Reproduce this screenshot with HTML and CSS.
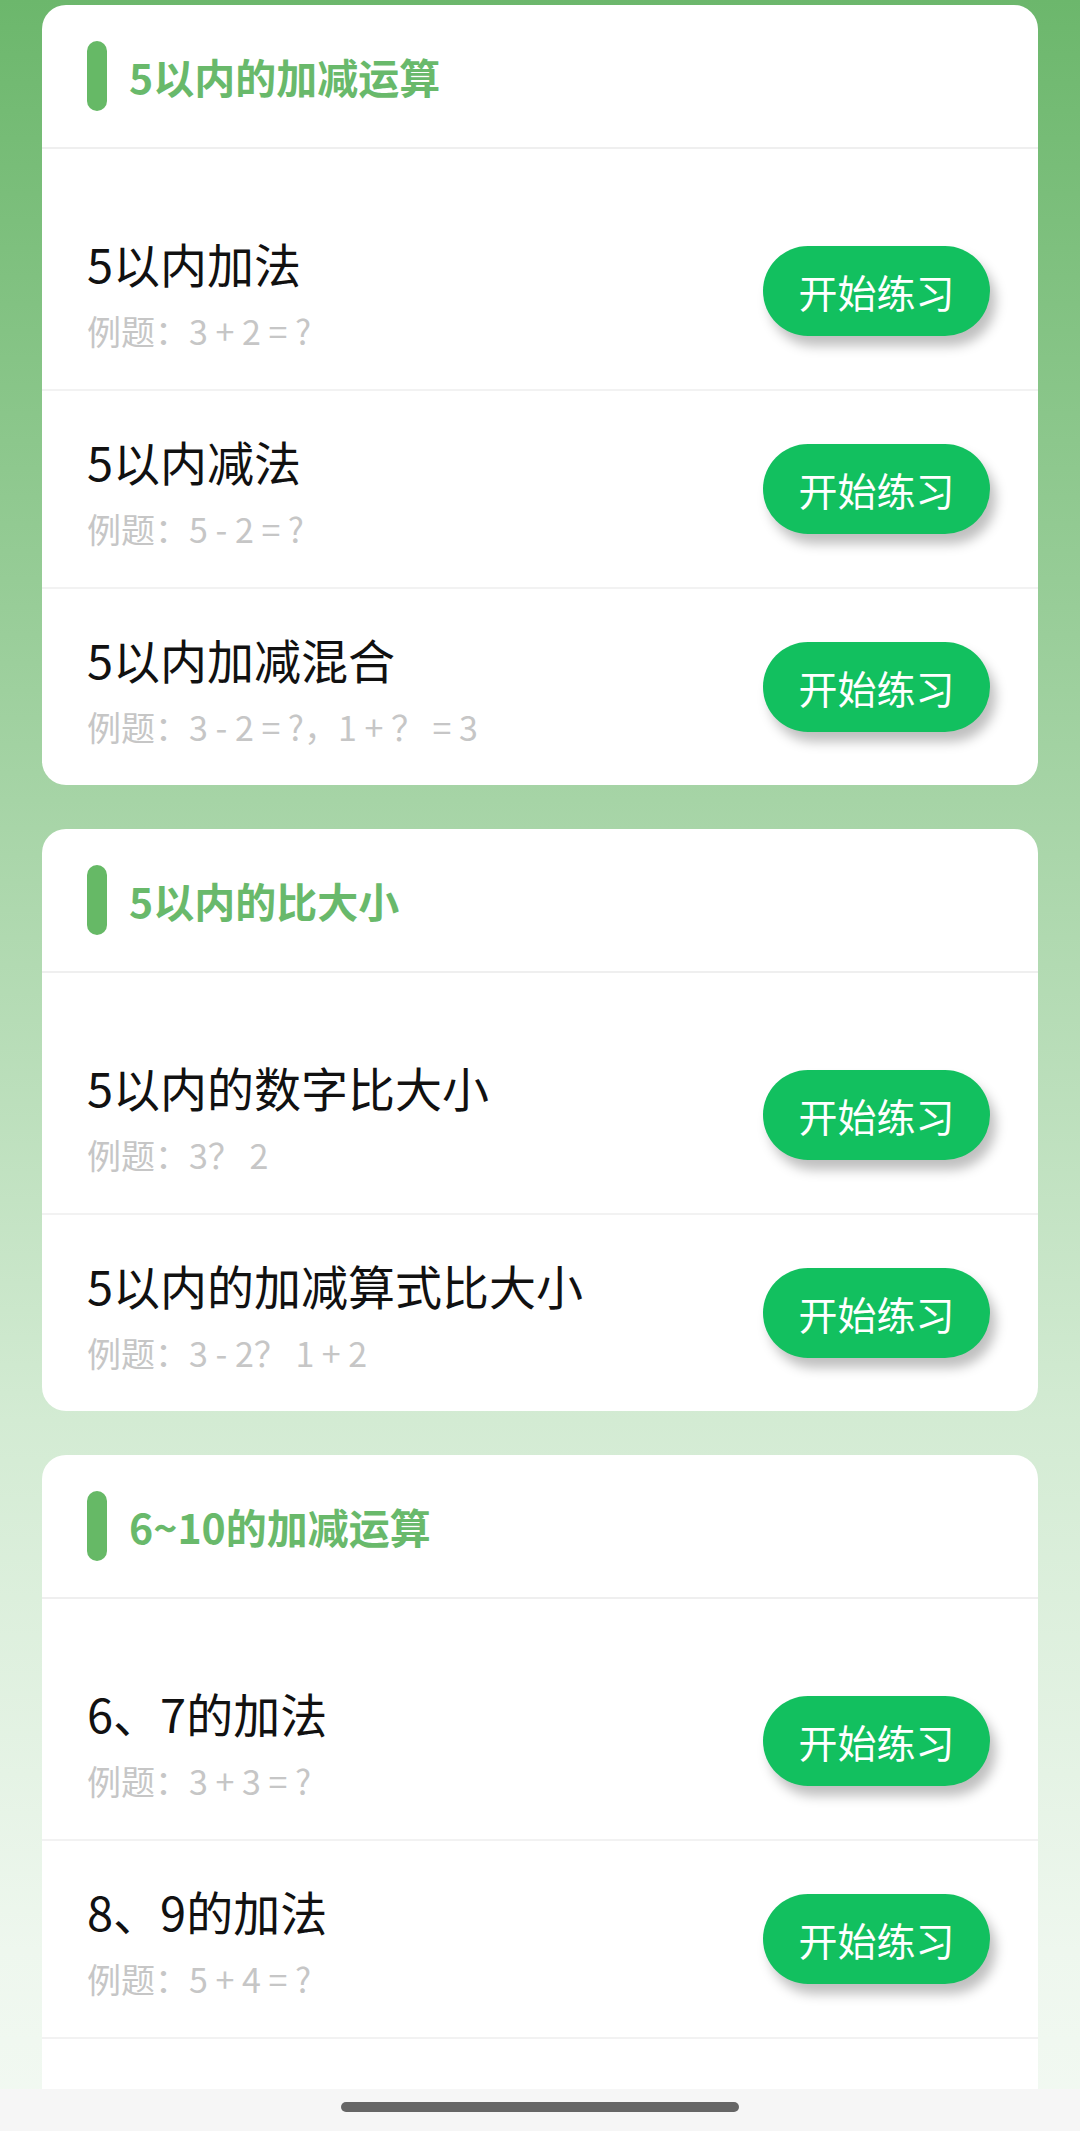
FILE: index.html
```html
<!DOCTYPE html>
<html lang="zh-CN">
<head>
<meta charset="utf-8">
<title>练习</title>
<link rel="stylesheet" href="styles.css">
</head>
<body>
<div class="page">
  <section class="card">
    <div class="card-head"><span class="bar"></span><h2 class="head-title">5以内的加减运算</h2></div>
    <div class="list">
      <div class="row">
        <div class="info"><div class="title">5以内加法</div><div class="sub">例题：3 + 2 = ?</div></div>
        <button class="btn">开始练习</button>
      </div>
      <div class="row">
        <div class="info"><div class="title">5以内减法</div><div class="sub">例题：5 - 2 = ?</div></div>
        <button class="btn">开始练习</button>
      </div>
      <div class="row">
        <div class="info"><div class="title">5以内加减混合</div><div class="sub">例题：3 - 2 = ?，1 + ？ = 3</div></div>
        <button class="btn">开始练习</button>
      </div>
    </div>
  </section>

  <section class="card">
    <div class="card-head"><span class="bar"></span><h2 class="head-title">5以内的比大小</h2></div>
    <div class="list">
      <div class="row">
        <div class="info"><div class="title">5以内的数字比大小</div><div class="sub">例题：3？ 2</div></div>
        <button class="btn">开始练习</button>
      </div>
      <div class="row">
        <div class="info"><div class="title">5以内的加减算式比大小</div><div class="sub">例题：3 - 2？ 1 + 2</div></div>
        <button class="btn">开始练习</button>
      </div>
    </div>
  </section>

  <section class="card">
    <div class="card-head"><span class="bar"></span><h2 class="head-title">6~10的加减运算</h2></div>
    <div class="list">
      <div class="row">
        <div class="info"><div class="title">6、7的加法</div><div class="sub">例题：3 + 3 = ?</div></div>
        <button class="btn">开始练习</button>
      </div>
      <div class="row">
        <div class="info"><div class="title">8、9的加法</div><div class="sub">例题：5 + 4 = ?</div></div>
        <button class="btn">开始练习</button>
      </div>
      <div class="row">
        <div class="info"><div class="title">10的加法</div><div class="sub">例题：5 + 5 = ?</div></div>
        <button class="btn">开始练习</button>
      </div>
    </div>
  </section>
</div>
<div class="navbar"><span class="handle"></span></div>
</body>
</html>
```

FILE: styles.css
```css
html, body {
  margin: 0;
  padding: 0;
  height: 2131px;
  overflow: hidden;
}

body {
  font-family: "Noto Sans CJK SC", "Noto Sans", sans-serif;
  background: #f0f8f0;
}

.page {
  height: 2131px;
  box-sizing: border-box;
  padding: 5px 42px 0 42px;
  display: flex;
  flex-direction: column;
  gap: 44px;
  background: linear-gradient(180deg, #6cb76c 0px, #a6d4a6 800px, #d3ebd3 1420px, #eef7ee 1950px, #f2f9f2 2131px);
  overflow: hidden;
}

.card {
  flex: none;
  background: #ffffff;
  border-radius: 24px;
  overflow: hidden;
}

.card-head {
  height: 142px;
  display: flex;
  align-items: center;
  padding-left: 45px;
  border-bottom: 2px solid #efefef;
}

.bar {
  width: 20px;
  height: 70px;
  border-radius: 10px;
  background: #66b966;
  flex: none;
}

.head-title {
  margin: 0 0 0 22px;
  font-size: 41px;
  font-weight: 700;
  color: #69b96b;
  line-height: 1;
}

.list {
  padding-top: 44px;
}

.row {
  height: 196px;
  display: flex;
  align-items: center;
  justify-content: space-between;
  padding: 0 48px 0 45px;
}

.row + .row {
  border-top: 2px solid #f2f2f2;
}

.info {
  padding-top: 4px;
}

.title {
  font-size: 47px;
  line-height: 60px;
  color: #111111;
}

.sub {
  margin-top: 16px;
  font-size: 34px;
  line-height: 44px;
  color: #c6c6c6;
}

.btn {
  width: 227px;
  height: 90px;
  border: none;
  border-radius: 45px;
  background: #12c05f;
  color: #ffffff;
  font-family: "Noto Sans CJK SC", "Noto Sans", sans-serif;
  font-size: 39px;
  padding: 0;
  box-shadow: 6px 10px 12px rgba(0, 0, 0, 0.25);
  flex: none;
}

.navbar {
  position: fixed;
  left: 0;
  right: 0;
  bottom: 0;
  z-index: 10;
  height: 42px;
  background: #f6f6f6;
  display: flex;
  justify-content: center;
  align-items: flex-start;
}

.handle {
  margin-top: 13px;
  width: 398px;
  height: 10px;
  border-radius: 5px;
  background: #666666;
}
```
